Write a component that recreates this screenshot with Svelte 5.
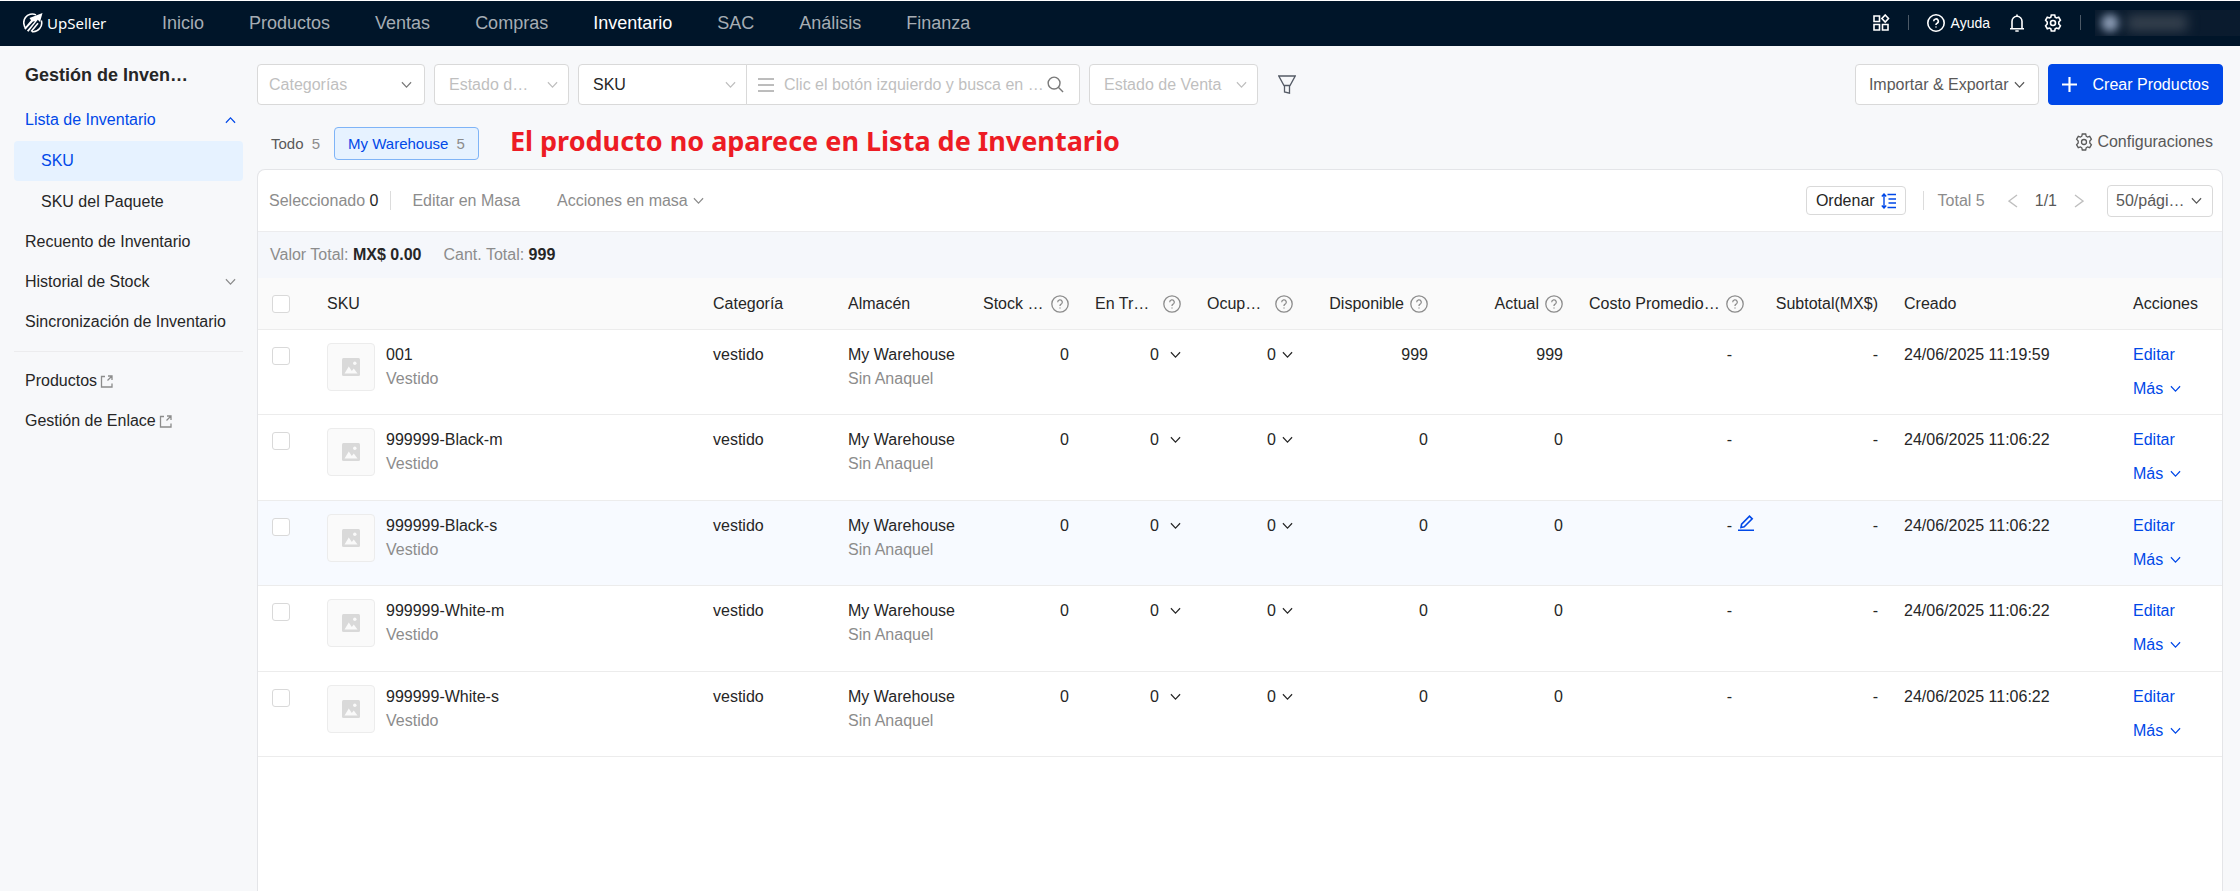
<script lang="ts">
  interface Item {
    sku: string
    qty: number
    created: string
  }

  const nav = ['Inicio', 'Productos', 'Ventas', 'Compras', 'Inventario', 'SAC', 'Análisis', 'Finanza']

  const items: Item[] = [
    { sku: '001', qty: 999, created: '24/06/2025 11:19:59' },
    { sku: '999999-Black-m', qty: 0, created: '24/06/2025 11:06:22' },
    { sku: '999999-Black-s', qty: 0, created: '24/06/2025 11:06:22' },
    { sku: '999999-White-m', qty: 0, created: '24/06/2025 11:06:22' },
    { sku: '999999-White-s', qty: 0, created: '24/06/2025 11:06:22' },
  ]

  let active = $state('999999-Black-s')
  let search = $state('')
</script>

{#snippet chevron(dir = 'down')}
  <svg class="chevron" class:up={dir === 'up'} viewBox="0 0 12 8" aria-hidden="true">
    <path d="M1 1l5 5.4L11 1" />
  </svg>
{/snippet}

{#snippet help()}
  <svg class="help" viewBox="0 0 18 18" aria-hidden="true">
    <circle cx="9" cy="9" r="8.2" />
    <path d="M6.7 7.2a2.3 2.3 0 1 1 3.4 2c-.8.4-1.1.8-1.1 1.5v.3M9 12.4v1.2" />
  </svg>
{/snippet}

{#snippet gear()}
  <svg class="gear" viewBox="0 0 18 18" aria-hidden="true">
    <path d="M7.3 1h3.4l.5 2.2 1.3.8 2.2-.7 1.7 2.9L14.800 8v2l1.600 1.800-1.700 2.900-2.200-.7-1.300.8-.5 2.200H7.300l-.5-2.200-1.300-.8-2.200.7-1.700-2.900L3.200 10V8L1.600 6.200l1.700-2.900 2.200.7 1.300-.8z" />
    <circle cx="9" cy="9" r="2.5" />
  </svg>
{/snippet}

{#snippet external()}
  <svg class="external" viewBox="0 0 13 13" aria-hidden="true">
    <path d="M5 1.500H1.500v10.500H12V8.500M8 1h4v4M12 1L7.500 5.500" />
  </svg>
{/snippet}

<div class="app">
  <header class="topbar">
    <a class="logo" href="#inicio">
      <svg viewBox="0 0 20 20" aria-hidden="true">
        <path class="ring" d="M3 15.500A8.600 8.600 0 0 1 13 1.900M18.300 7.500A8.600 8.600 0 0 1 9 18.600" />
        <path class="fill" d="M19.500 0L17 9l-2.200-2.200-9.300 12-1.600-1 8.100-9.500-2 .2-7.700 8.200-1-1.500L8 7.300 6.500 5z" />
        <path class="ring" d="M8.200 18.500L15 10.200" />
      </svg>
      <span>UpSeller</span>
    </a>
    <nav class="mainnav">
      {#each nav as label (label)}
        <a href="#{label}" class:current={label === 'Inventario'}>{label}</a>
      {/each}
    </nav>
    <div class="tools">
      <button class="tool" aria-label="Aplicaciones">
        <svg viewBox="0 0 18 18" aria-hidden="true">
          <path d="M2 2h5.500v5.500H2zM2 10.500h5.500V16H2zM10.500 10.500H16V16h-5.500zM13.200 1l3.300 3.500-3.300 3.500-3.300-3.500z" />
        </svg>
      </button>
      <span class="bar"></span>
      <button class="tool">{@render help()} Ayuda</button>
      <button class="tool" aria-label="Notificaciones">
        <svg viewBox="0 0 18 18" aria-hidden="true">
          <path d="M9 .5v1.500M4 14.500V7.300a5 5 0 0 1 10 0v7.200M2 14.700h14M7.300 17h3.400" />
        </svg>
      </button>
      <button class="tool" aria-label="Ajustes">{@render gear()}</button>
      <span class="bar"></span>
      <div class="account"><i class="avatar"></i><i class="name"></i></div>
    </div>
  </header>

  <div class="layout">
    <aside class="sidebar">
      <h1>Gestión de Inven…</h1>
      <a class="item open" href="#lista">Lista de Inventario {@render chevron('up')}</a>
      <div class="submenu">
        <a class="item sub selected" href="#sku">SKU</a>
        <a class="item sub" href="#paquete">SKU del Paquete</a>
      </div>
      <a class="item" href="#recuento">Recuento de Inventario</a>
      <a class="item" href="#historial">Historial de Stock {@render chevron()}</a>
      <a class="item" href="#sincronizacion">Sincronización de Inventario</a>
      <hr />
      <a class="item link" href="#productos">Productos{@render external()}</a>
      <a class="item link" href="#enlace">Gestión de Enlace{@render external()}</a>
    </aside>

    <main>
      <div class="filters">
        <div class="select w-cat dark">
          <select aria-label="Categorías"><option>Categorías</option></select>
          {@render chevron()}
        </div>
        <div class="select w-state">
          <select aria-label="Estado de stock"><option>Estado d…</option></select>
          {@render chevron()}
        </div>
        <div class="group">
          <div class="select w-key value">
            <select aria-label="Buscar por"><option>SKU</option></select>
            {@render chevron()}
          </div>
          <div class="search">
            <svg class="lines" viewBox="0 0 16 14" aria-hidden="true"><path d="M0 1h16M0 7h16M0 13h16" /></svg>
            <input aria-label="Buscar" placeholder="Clic el botón izquierdo y busca en …" bind:value={search} />
            <button aria-label="Buscar">
              <svg class="lens" viewBox="0 0 18 18" aria-hidden="true">
                <circle cx="7.500" cy="7.500" r="6.300" />
                <path d="M12 12l5 5" />
              </svg>
            </button>
          </div>
        </div>
        <div class="select w-sale">
          <select aria-label="Estado de Venta"><option>Estado de Venta</option></select>
          {@render chevron()}
        </div>
        <button class="funnel" aria-label="Filtrar">
          <svg viewBox="0 0 18 19" aria-hidden="true">
            <path d="M.8 1h16.400L12 10.500H6zM6.500 10.500v6.500l5 1.200v-7.700" />
          </svg>
        </button>
        <button class="btn">Importar &amp; Exportar {@render chevron()}</button>
        <button class="btn primary">
          <svg viewBox="0 0 14 14" aria-hidden="true"><path d="M7 0v14M0 7h14" /></svg>
          Crear Productos
        </button>
      </div>

      <div class="tabs">
        <button class="tab">Todo <span>5</span></button>
        <button class="tab on">My Warehouse <span>5</span></button>
        <strong class="notice">El producto no aparece en Lista de Inventario</strong>
        <a class="config" href="#config">{@render gear()} Configuraciones</a>
      </div>

      <section class="panel">
        <div class="toolbar">
          <span>Seleccionado <b>0</b></span>
          <span class="bar"></span>
          <button class="plain">Editar en Masa</button>
          <button class="plain mass">Acciones en masa {@render chevron()}</button>
          <button class="order">
            Ordenar
            <svg viewBox="0 0 15 16" aria-hidden="true">
              <path d="M3 1.500v13M.8 3.500L3 1l2.200 2.500M.8 12.500L3 15l2.200-2.500M6.500 1.500H15M7.500 6H15M7.500 10H15M6.500 14.500H15" />
            </svg>
          </button>
          <span class="bar"></span>
          <span>Total 5</span>
          <div class="pager">
            <button aria-label="Anterior"><svg viewBox="0 0 10 14" aria-hidden="true"><path d="M9 1L1 7l8 6" /></svg></button>
            <span>1/1</span>
            <button aria-label="Siguiente"><svg viewBox="0 0 10 14" aria-hidden="true"><path d="M1 1l8 6-8 6" /></svg></button>
          </div>
          <div class="select w-size">
            <select aria-label="Por página"><option>50/pági…</option></select>
            {@render chevron()}
          </div>
        </div>

        <div class="summary">
          <span>Valor Total: <b>MX$ 0.00</b></span>
          <span>Cant. Total: <b>999</b></span>
        </div>

        <table>
          <colgroup>
            <col class="c-check" />
            <col />
            <col class="c-mid" />
            <col class="c-mid" />
            <col class="c-num" />
            <col class="c-num" />
            <col class="c-num" />
            <col class="c-mid" />
            <col class="c-mid" />
            <col class="c-cost" />
            <col class="c-mid" />
            <col class="c-date" />
            <col class="c-act" />
          </colgroup>
          <thead>
            <tr>
              <th><input type="checkbox" aria-label="Seleccionar todo" /></th>
              <th>SKU</th>
              <th>Categoría</th>
              <th>Almacén</th>
              <th><div class="head wide">Stock … {@render help()}</div></th>
              <th><div class="head wide">En Tr… {@render help()}</div></th>
              <th><div class="head wide">Ocup… {@render help()}</div></th>
              <th><div class="head">Disponible {@render help()}</div></th>
              <th><div class="head">Actual {@render help()}</div></th>
              <th><div class="head wide">Costo Promedio… {@render help()}</div></th>
              <th class="num">Subtotal(MX$)</th>
              <th>Creado</th>
              <th>Acciones</th>
            </tr>
          </thead>
          <tbody>
            {#each items as item (item.sku)}
              <tr class:active={item.sku === active} onmouseenter={() => (active = item.sku)}>
                <td><input type="checkbox" aria-label="Seleccionar {item.sku}" /></td>
                <td>
                  <div class="product">
                    <div class="thumb">
                      <svg viewBox="0 0 18 18" aria-hidden="true">
                        <rect width="18" height="18" rx="1.500" />
                        <circle cx="12.800" cy="5.200" r="1.700" />
                        <path d="M2.500 15.500l4.300-7 3 4.600 2-2.700 3.700 5.100z" />
                      </svg>
                    </div>
                    <div class="names">
                      <div>{item.sku}</div>
                      <div class="muted">Vestido</div>
                    </div>
                  </div>
                </td>
                <td>vestido</td>
                <td>
                  <div>My Warehouse</div>
                  <div class="muted">Sin Anaquel</div>
                </td>
                <td class="num">0</td>
                <td class="num"><button class="expand far">0 {@render chevron()}</button></td>
                <td class="num"><button class="expand">0 {@render chevron()}</button></td>
                <td class="num">{item.qty}</td>
                <td class="num">{item.qty}</td>
                <td class="num cost">
                  -
                  {#if item.sku === active}
                    <button class="edit" aria-label="Editar costo">
                      <svg viewBox="0 0 16 16" aria-hidden="true">
                        <path d="M0 15.200h16M3 12.500l.6-3.300L11.500 1.200l2.700 2.600-8 8z" />
                      </svg>
                    </button>
                  {/if}
                </td>
                <td class="num">-</td>
                <td>{item.created}</td>
                <td class="actions">
                  <a href="#editar">Editar</a>
                  <button>Más {@render chevron()}</button>
                </td>
              </tr>
            {/each}
          </tbody>
        </table>
      </section>
    </main>
  </div>
</div>

<style>
  :global(body) {
    background: #f7f8fa;
  }

  .app {
    min-height: 100vh;
    box-sizing: border-box;
    display: flex;
    flex-direction: column;
    border-top: 1px solid #fff;
    font: 16px/24px 'Liberation Sans', Arial, sans-serif;
    color: #262626;
  }

  svg {
    display: block;
    flex-shrink: 0;
    fill: none;
    stroke: currentColor;
  }

  a {
    color: inherit;
    text-decoration: none;
  }

  button {
    font: inherit;
    color: inherit;
    background: none;
    border: 0;
    padding: 0;
    cursor: pointer;
    white-space: nowrap;
  }

  b {
    color: #262626;
  }

  .chevron {
    width: 11px;
    height: 8px;
    stroke-width: 1.3;
  }

  .chevron.up {
    transform: rotate(180deg);
  }

  .help {
    width: 18px;
    height: 18px;
    stroke-width: 1.3;
  }

  .gear {
    width: 18px;
    height: 18px;
    stroke-width: 1.3;
  }

  .bar {
    width: 1px;
    height: 15px;
    background: #4c5966;
  }

  /* top bar */
  .topbar {
    display: flex;
    align-items: center;
    box-sizing: border-box;
    height: 45px;
    padding: 0 0 2px 23px;
    background: #001529;
    color: #a6adb4;
  }

  .logo {
    display: flex;
    align-items: center;
    gap: 4px;
    width: 139px;
    color: #fff;
    font: 400 15px/20px 'Noto Sans', 'Open Sans', sans-serif;
  }

  .logo svg {
    width: 20px;
    height: 20px;
  }

  .logo .ring {
    stroke-width: 1.6;
  }

  .logo .fill {
    fill: #fff;
    stroke: none;
  }

  .mainnav {
    display: flex;
    gap: 45px;
    font-size: 18px;
  }

  .mainnav .current {
    color: #fff;
  }

  .tools {
    display: flex;
    align-items: center;
    gap: 18px;
    margin-left: auto;
    color: #fff;
  }

  .tool {
    display: flex;
    align-items: center;
    gap: 6px;
    font-size: 14px;
  }

  .tool svg {
    width: 18px;
    height: 18px;
    stroke-width: 1.6;
  }

  .account {
    display: flex;
    align-items: center;
    gap: 8px;
    width: 145px;
    height: 26px;
    margin-left: -4px;
    background: #0a1b2e;
    overflow: hidden;
  }

  .avatar {
    width: 18px;
    height: 18px;
    margin-left: 6px;
    border-radius: 50%;
    background: #8b9bb4;
    filter: blur(4px);
  }

  .name {
    width: 60px;
    height: 16px;
    background: #36414e;
    filter: blur(6px);
  }

  /* sidebar */
  .layout {
    display: flex;
    flex: 1;
  }

  .sidebar {
    width: 229px;
    padding: 17px 14px 0;
    flex-shrink: 0;
  }

  h1 {
    margin: 0 0 13px;
    padding-left: 11px;
    font-size: 18px;
    line-height: 24px;
  }

  .item {
    display: flex;
    align-items: center;
    justify-content: space-between;
    height: 40px;
    padding: 0 7px 0 11px;
    border-radius: 4px;
    white-space: nowrap;
  }

  .item .chevron {
    color: #8c8c8c;
  }

  .item.open,
  .item.open .chevron {
    color: #0048e8;
  }

  .submenu {
    display: grid;
    gap: 1px;
    padding-top: 1px;
  }

  .item.sub {
    padding-left: 27px;
  }

  .item.selected {
    background: #e6f2ff;
    color: #0048e8;
  }

  .item.link {
    justify-content: flex-start;
    gap: 3px;
  }

  .external {
    width: 13px;
    height: 13px;
    color: #8c8c8c;
    stroke-width: 1.3;
  }

  hr {
    margin: 9px 0;
    border: 0;
    border-top: 1px solid #ececee;
  }

  /* filters */
  main {
    flex: 1;
    min-width: 0;
    display: flex;
    flex-direction: column;
    padding: 18px 17px 0 0;
  }

  .filters {
    display: flex;
    gap: 9px;
    height: 41px;
  }

  .select {
    position: relative;
    box-sizing: border-box;
    background: #fff;
    border: 1px solid #d9d9d9;
    border-radius: 4px;
    color: #bfbfbf;
  }

  .select select {
    appearance: none;
    width: 100%;
    height: 100%;
    padding: 0 30px 0 14px;
    border: 0;
    background: none;
    font: inherit;
    color: inherit;
  }

  .select .chevron {
    position: absolute;
    right: 10px;
    top: calc(50% - 4px);
    pointer-events: none;
  }

  .dark select {
    padding-left: 11px;
  }

  .dark .chevron {
    right: 12px;
    color: #7a7a7a;
  }

  .value select {
    color: #262626;
  }

  .value .chevron {
    color: #bfbfbf;
  }

  .w-cat {
    width: 168px;
  }

  .w-state {
    width: 135px;
  }

  .w-key {
    width: 169px;
    border-radius: 4px 0 0 4px;
  }

  .w-sale {
    width: 169px;
  }

  .group {
    display: flex;
  }

  .search {
    display: flex;
    align-items: center;
    box-sizing: border-box;
    width: 334px;
    margin-left: -1px;
    padding: 0 15px 0 11px;
    background: #fff;
    border: 1px solid #d9d9d9;
    border-radius: 0 4px 4px 0;
    color: #7a7a7a;
  }

  .search input {
    flex: 1;
    min-width: 0;
    padding: 0 0 0 10px;
    border: 0;
    outline: 0;
    background: none;
    font: inherit;
    text-overflow: ellipsis;
  }

  .search input::placeholder {
    color: #bfbfbf;
  }

  .lines {
    width: 16px;
    height: 14px;
  }

  .lens {
    width: 17px;
    height: 17px;
    stroke-width: 1.5;
  }

  .funnel {
    margin: 0 auto 0 11px;
    color: #555b66;
  }

  .funnel svg {
    width: 18px;
    height: 19px;
    stroke-width: 1.3;
  }

  .btn {
    display: flex;
    align-items: center;
    gap: 5px;
    padding: 0 13px;
    border: 1px solid #d9d9d9;
    border-radius: 4px;
    background: #fff;
    color: #595959;
  }

  .btn.primary {
    gap: 16px;
    border-color: #0048e8;
    background: #0048e8;
    color: #fff;
  }

  .primary svg {
    width: 15px;
    height: 15px;
    stroke-width: 2;
  }

  /* warehouse tabs */
  .tabs {
    display: flex;
    align-items: center;
    height: 33px;
    padding: 22px 10px 9px 0;
  }

  .tab {
    box-sizing: border-box;
    height: 33px;
    padding: 0 13px;
    border: 1px solid transparent;
    border-radius: 4px;
    color: #595959;
    font-size: 15px;
  }

  .tab span {
    margin-left: 4px;
    color: #8c8c8c;
  }

  .tab.on {
    border-color: #7fb4f7;
    background: #e6f2ff;
    color: #0048e8;
  }

  .notice {
    margin-left: 31px;
    padding-bottom: 5px;
    font: 700 27px/32px 'Noto Sans', 'Open Sans', sans-serif;
    color: #ed1c24;
    white-space: nowrap;
  }

  .config {
    display: flex;
    align-items: center;
    gap: 4px;
    margin-left: auto;
    padding-bottom: 3px;
    color: #595959;
  }

  /* panel */
  .panel {
    flex: 1;
    background: #fff;
    border: 1px solid #e4e5e8;
    border-bottom: 0;
    border-radius: 8px 8px 0 0;
  }

  .toolbar {
    display: flex;
    align-items: center;
    height: 61px;
    padding: 0 9px 0 11px;
    color: #8c8c8c;
  }

  .toolbar b {
    font-weight: 400;
  }

  .toolbar .bar {
    height: 19px;
    margin: 0 14px 0 12px;
    background: #dcdcdc;
  }

  .plain {
    margin-left: 7px;
  }

  .mass {
    display: flex;
    align-items: center;
    gap: 5px;
    margin-left: 37px;
  }

  .order {
    display: flex;
    align-items: center;
    gap: 6px;
    height: 29px;
    margin: 0 5px 0 auto;
    padding: 0 9px;
    border: 1px solid #d9d9d9;
    border-radius: 4px;
    color: #262626;
    box-sizing: border-box;
  }

  .order svg {
    width: 15px;
    height: 16px;
    color: #0048e8;
    stroke-width: 1.4;
  }

  .pager {
    display: flex;
    align-items: center;
    gap: 17px;
    margin: 0 23px;
    color: #595959;
  }

  .pager svg {
    width: 10px;
    height: 14px;
    color: #bfbfbf;
    stroke-width: 1.4;
  }

  .w-size {
    width: 106px;
    height: 32px;
    color: #595959;
  }

  .w-size select {
    padding: 0 28px 0 8px;
  }

  .summary {
    display: flex;
    align-items: center;
    gap: 22px;
    height: 46px;
    padding-left: 12px;
    border-top: 1px solid #ececee;
    background: #f5f7fb;
    color: #8c8c8c;
  }

  /* table */
  table {
    width: 100%;
    table-layout: fixed;
    border-collapse: separate;
    border-spacing: 0;
  }

  .c-check {
    width: 56px;
  }

  .c-mid {
    width: 135px;
  }

  .c-num {
    width: 112px;
  }

  .c-cost {
    width: 180px;
  }

  .c-date {
    width: 229px;
  }

  .c-act {
    width: 102px;
  }

  th,
  td {
    box-sizing: border-box;
    padding: 0 13px;
    border-bottom: 1px solid #ececec;
    text-align: left;
    white-space: nowrap;
  }

  th {
    height: 52px;
    background: #fafafa;
    font-weight: 400;
  }

  td {
    height: 85px;
    padding-top: 13px;
    vertical-align: top;
  }

  tr:nth-child(even) td {
    height: 86px;
  }

  tr.active td {
    background: #f7faff;
  }

  .num {
    text-align: right;
  }

  .head {
    display: flex;
    align-items: center;
    justify-content: flex-end;
    gap: 6px;
  }

  .head.wide {
    justify-content: space-between;
  }

  .head .help {
    color: #8c8c8c;
  }

  input[type='checkbox'] {
    appearance: none;
    display: block;
    box-sizing: border-box;
    width: 18px;
    height: 18px;
    margin: 4px 0 0 1px;
    border: 1px solid #d9d9d9;
    border-radius: 3px;
    background: #fff;
  }

  input[type='checkbox']:checked {
    background: #0048e8;
  }

  th input[type='checkbox'] {
    margin-top: 0;
  }

  .product {
    display: flex;
    gap: 11px;
  }

  .thumb {
    display: grid;
    place-items: center;
    box-sizing: border-box;
    width: 48px;
    height: 48px;
    border: 1px solid #ececec;
    border-radius: 4px;
    background: #fafafa;
  }

  .thumb svg {
    width: 18px;
    height: 18px;
    fill: #fafafa;
    stroke: none;
  }

  .thumb rect {
    fill: #d9d9d9;
  }

  .muted {
    color: #8c8c8c;
  }

  .expand {
    display: inline-flex;
    align-items: center;
    gap: 6px;
  }

  .expand.far {
    gap: 11px;
  }

  .cost {
    position: relative;
    padding-right: 24px;
  }

  .edit {
    position: absolute;
    right: 2px;
    top: 14px;
    color: #0048e8;
  }

  .edit svg {
    width: 16px;
    height: 16px;
    stroke-width: 1.6;
  }

  .actions {
    color: #0048e8;
  }

  .actions a,
  .actions button {
    display: flex;
    align-items: center;
    gap: 7px;
    margin-bottom: 10px;
  }
</style>
